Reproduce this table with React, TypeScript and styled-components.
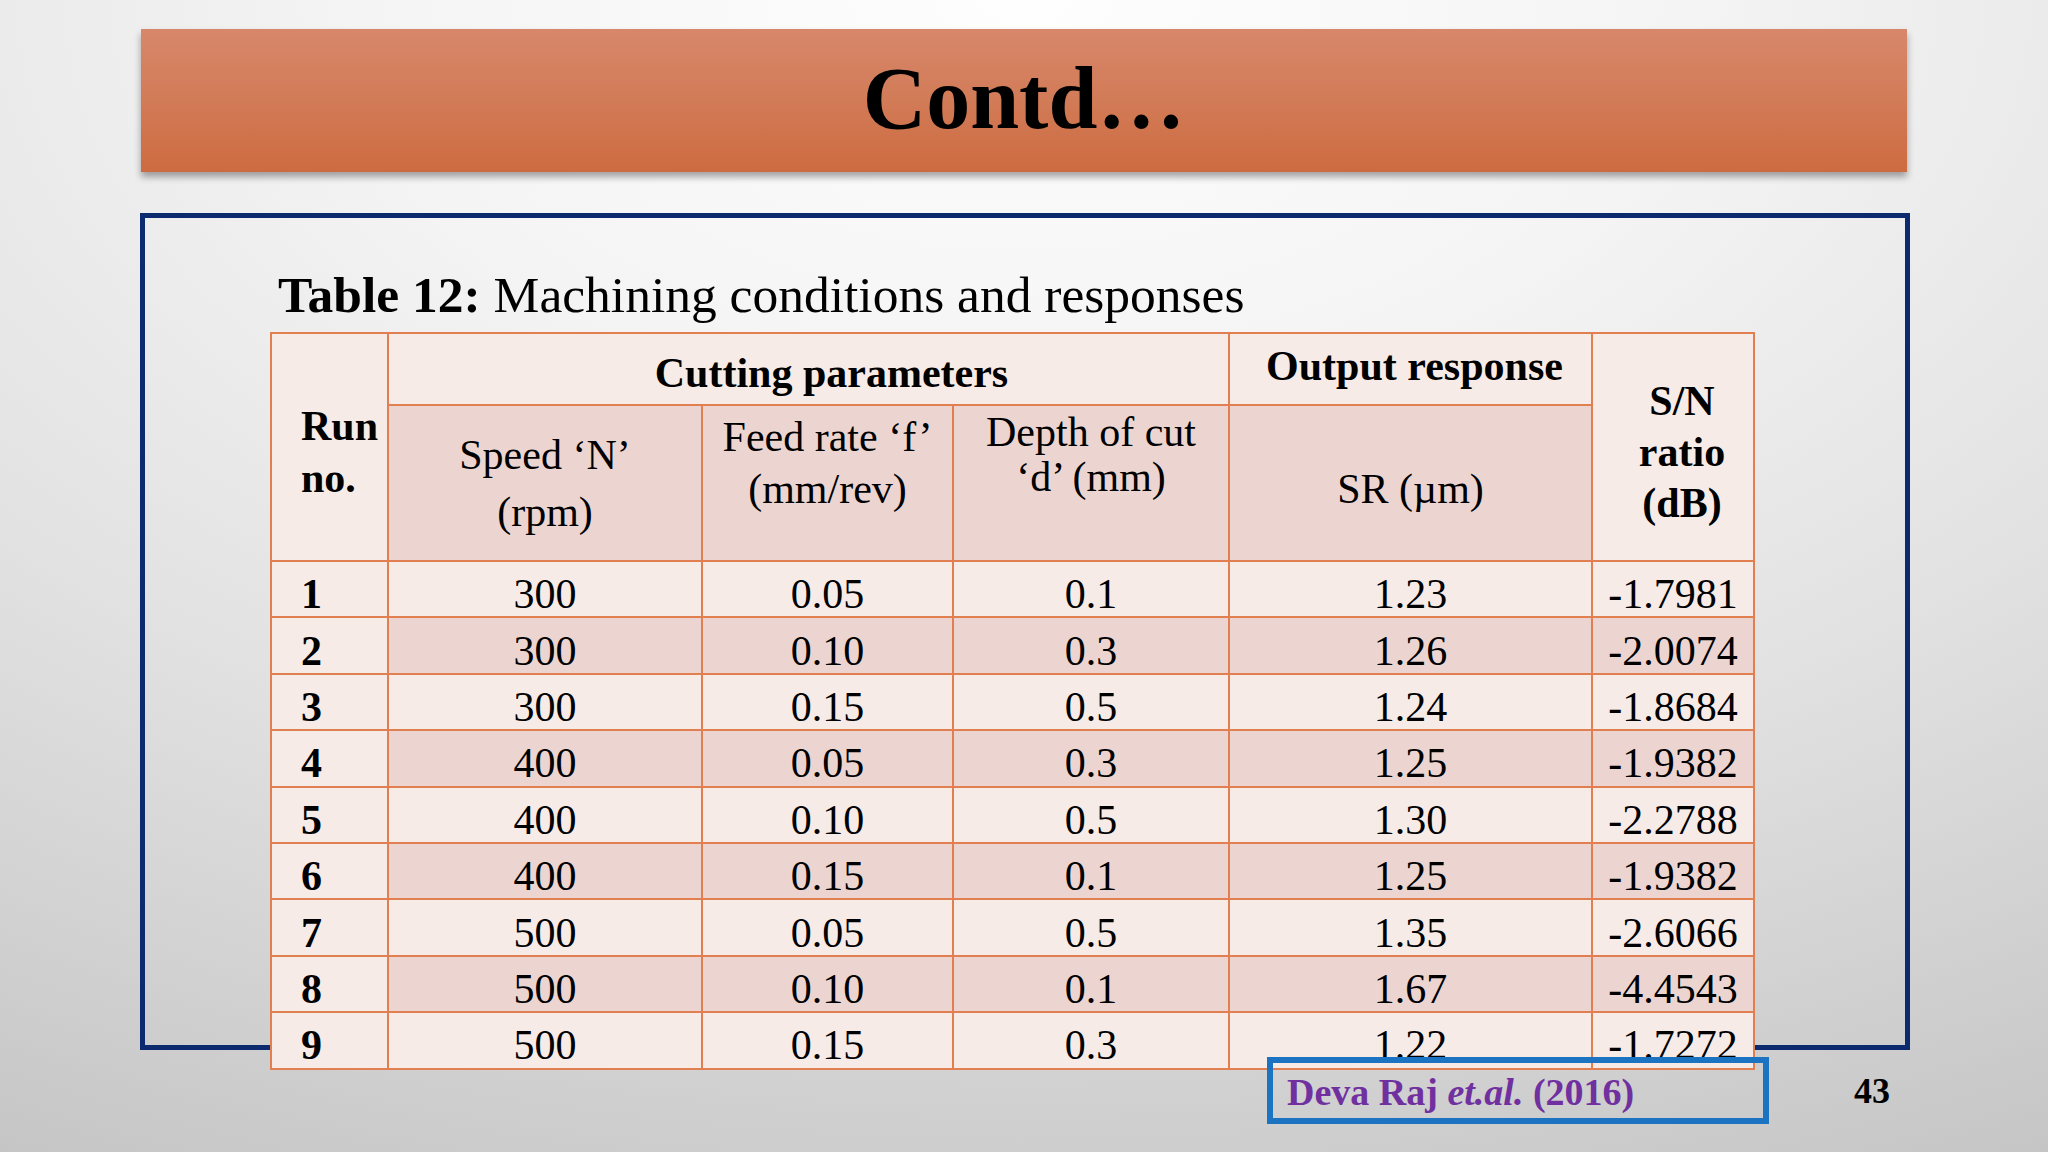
import React from "react";
import styled, { createGlobalStyle } from "styled-components";

const GlobalStyle = createGlobalStyle`
  html, body {
    margin: 0;
    padding: 0;
  }
  body {
    width: 2048px;
    height: 1152px;
    overflow: hidden;
    font-family: "Liberation Serif", "Times New Roman", serif;
    color: #000;
  }
`;

const Slide = styled.div`
  width: 2048px;
  height: 1152px;
  box-sizing: border-box;
  padding-top: 29px;
  display: flex;
  flex-direction: column;
  overflow: hidden;
  background: radial-gradient(
    ellipse 110% 115% at 50% 0%,
    #fefefe 0%,
    #f4f4f4 30%,
    #e2e2e2 60%,
    #c4c4c4 100%
  );
`;

const TitleBar = styled.header`
  margin-left: 141px;
  width: 1766px;
  height: 143px;
  flex: none;
  display: flex;
  align-items: center;
  justify-content: center;
  box-sizing: border-box;
  padding-bottom: 4px;
  background: linear-gradient(180deg, #d7876b 0%, #d27b57 50%, #cd6b40 100%);
  box-shadow: 0 5px 7px rgba(0, 0, 0, 0.35);
`;

const Title = styled.h1`
  margin: 0;
  font-family: "Liberation Serif", "Times New Roman", serif;
  font-weight: 700;
  font-size: 88px;
  line-height: 1;
  color: #000;
`;

const Frame = styled.section`
  margin-top: 41px;
  margin-left: 140px;
  width: 1770px;
  height: 837px;
  flex: none;
  box-sizing: border-box;
  border: 5px solid #0c2a6e;
  padding: 47px 0 0 125px;
`;

const Caption = styled.p`
  margin: 0 0 7px 8px;
  font-size: 51.5px;
  line-height: 60px;
  white-space: nowrap;
`;

const CaptionLabel = styled.strong`
  font-weight: 700;
`;

const DataTable = styled.table`
  border-collapse: collapse;
  table-layout: fixed;
  width: 1483px;
  font-family: "Liberation Serif", "Times New Roman", serif;
  font-size: 42px;
  color: #000;
`;

type Shade = "light" | "dark";

const shadeColor = (s: Shade) => (s === "dark" ? "#ecd5d0" : "#f7ebe8");

const HeadCell = styled.th<{
  $shade: Shade;
  $align?: "left" | "center";
  $valign?: "top" | "middle";
  $lh: number;
  $pt?: number;
  $pl?: number;
  $pb?: number;
  $bold?: boolean;
}>`
  border: 2px solid #e17f50;
  background: ${(p) => shadeColor(p.$shade)};
  text-align: ${(p) => p.$align ?? "center"};
  vertical-align: ${(p) => p.$valign ?? "middle"};
  font-weight: ${(p) => (p.$bold ? 700 : 400)};
  line-height: ${(p) => p.$lh}px;
  padding: ${(p) => p.$pt ?? 0}px 0 ${(p) => p.$pb ?? 0}px ${(p) => p.$pl ?? 0}px;
`;

const HeadRow = styled.tr<{ $h: number }>`
  height: ${(p) => p.$h}px;
`;

const BodyRow = styled.tr`
  height: 56.4px;
`;

const DataCell = styled.td<{ $shade: Shade; $first?: boolean }>`
  border: 2px solid #e17f50;
  background: ${(p) => shadeColor(p.$shade)};
  text-align: ${(p) => (p.$first ? "left" : "center")};
  font-weight: ${(p) => (p.$first ? 700 : 400)};
  padding: 10px 0 0 ${(p) => (p.$first ? 29 : 0)}px;
  line-height: 40px;
  vertical-align: middle;
`;

const Footer = styled.footer`
  position: relative;
  z-index: 1;
  margin-top: 7px;
  padding-left: 1267px;
  display: flex;
  align-items: flex-start;
`;

const CitationBox = styled.div`
  width: 502px;
  height: 67px;
  box-sizing: border-box;
  border: 6px solid #1b73c1;
  padding: 4px 0 0 14px;
  font-size: 38px;
  line-height: 50px;
  font-weight: 700;
  color: #7030a0;
  white-space: nowrap;
`;

const EtAl = styled.em`
  font-style: italic;
  font-weight: 700;
`;

const PageNumber = styled.div`
  margin-left: 85px;
  padding-top: 12px;
  font-size: 36px;
  line-height: 44px;
  font-weight: 700;
  color: #000;
`;

const rows: [string, string, string, string, string, string][] = [
  ["1", "300", "0.05", "0.1", "1.23", "-1.7981"],
  ["2", "300", "0.10", "0.3", "1.26", "-2.0074"],
  ["3", "300", "0.15", "0.5", "1.24", "-1.8684"],
  ["4", "400", "0.05", "0.3", "1.25", "-1.9382"],
  ["5", "400", "0.10", "0.5", "1.30", "-2.2788"],
  ["6", "400", "0.15", "0.1", "1.25", "-1.9382"],
  ["7", "500", "0.05", "0.5", "1.35", "-2.6066"],
  ["8", "500", "0.10", "0.1", "1.67", "-4.4543"],
  ["9", "500", "0.15", "0.3", "1.22", "-1.7272"],
];

const colWidths = [117, 314, 251, 276, 363, 162];

export default function App() {
  return (
    <>
      <GlobalStyle />
      <Slide>
        <TitleBar>
          <Title>Contd…</Title>
        </TitleBar>
        <Frame>
          <Caption>
            <CaptionLabel>Table 12:</CaptionLabel> Machining conditions and responses
          </Caption>
          <DataTable>
            <colgroup>
              {colWidths.map((w, i) => (
                <col key={i} style={{ width: w }} />
              ))}
            </colgroup>
            <thead>
              <HeadRow $h={72}>
                <HeadCell rowSpan={2} $shade="light" $align="left" $lh={52} $pl={29} $pt={10} $bold>
                  Run
                  <br />
                  no.
                </HeadCell>
                <HeadCell colSpan={3} $shade="light" $lh={50} $pt={8} $pl={46} $bold>
                  Cutting parameters
                </HeadCell>
                <HeadCell $shade="light" $lh={50} $pb={6} $pl={8} $bold>
                  Output response
                </HeadCell>
                <HeadCell rowSpan={2} $shade="light" $lh={51} $pt={10} $pl={18} $bold>
                  S/N
                  <br />
                  ratio
                  <br />
                  (dB)
                </HeadCell>
              </HeadRow>
              <HeadRow $h={156}>
                <HeadCell $shade="dark" $lh={57} $pt={2}>
                  Speed ‘N’
                  <br />
                  (rpm)
                </HeadCell>
                <HeadCell $shade="dark" $valign="top" $lh={52} $pt={5}>
                  Feed rate ‘f’
                  <br />
                  (mm/rev)
                </HeadCell>
                <HeadCell $shade="dark" $valign="top" $lh={45} $pt={4}>
                  Depth of cut
                  <br />
                  ‘d’ (mm)
                </HeadCell>
                <HeadCell $shade="dark" $lh={52} $pt={12}>
                  SR (µm)
                </HeadCell>
              </HeadRow>
            </thead>
            <tbody>
              {rows.map((r, i) => {
                const shade: Shade = i % 2 === 1 ? "dark" : "light";
                return (
                  <BodyRow key={r[0]}>
                    {r.map((v, j) => (
                      <DataCell key={j} $first={j === 0} $shade={j === 0 ? "light" : shade}>
                        {v}
                      </DataCell>
                    ))}
                  </BodyRow>
                );
              })}
            </tbody>
          </DataTable>
        </Frame>
        <Footer>
          <CitationBox>
            Deva Raj <EtAl>et.al.</EtAl> (2016)
          </CitationBox>
          <PageNumber>43</PageNumber>
        </Footer>
      </Slide>
    </>
  );
}
